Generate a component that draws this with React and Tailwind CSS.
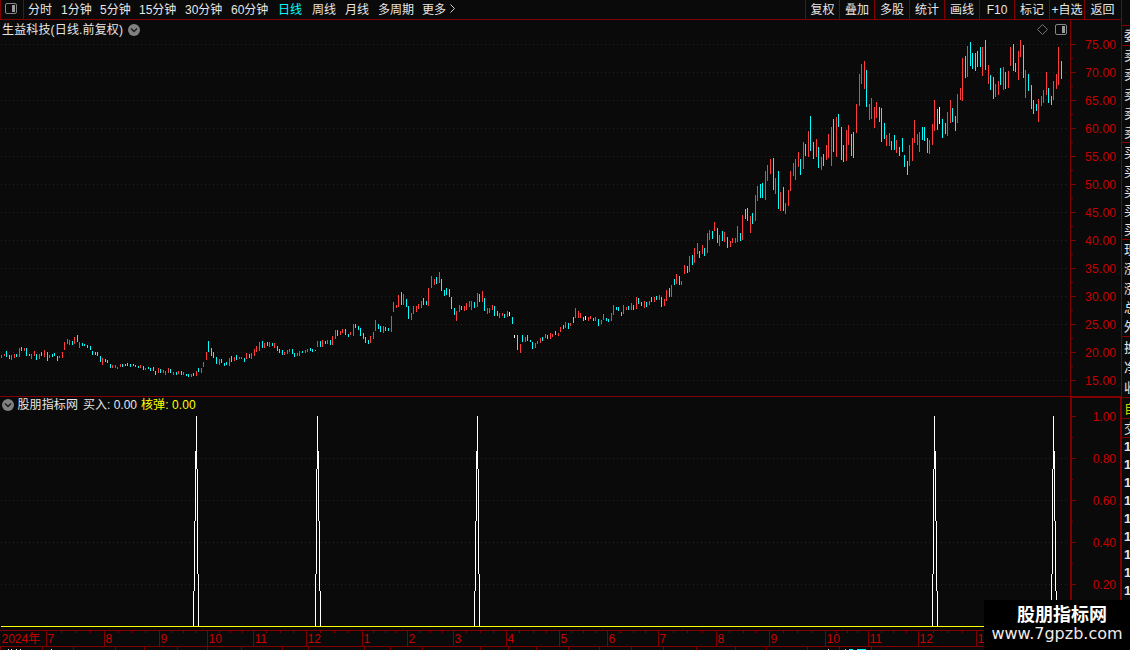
import React from "react";

// x, high, low, kind (r = up, c = down, w = flat)
const CANDLES = `
1 355 358 r,4 354 356 r,6 351 357 c,9 355 359 c,11 355 360 r,14 354 358 r,16 354 357 c,19 348 357 r,21 347 351 c,24 348 351 r,
26 348 356 c,29 354 356 c,31 354 359 r,34 351 356 r,36 354 360 c,39 354 359 r,41 352 356 c,44 350 357 r,47 352 361 c,49 355 358 r,
52 354 357 c,54 353 356 c,57 356 361 c,59 356 358 r,62 352 358 r,64 342 350 r,67 339 344 r,69 340 345 r,72 341 345 c,74 337 344 r,
77 335 342 c,79 342 348 r,82 343 346 c,84 344 346 c,87 345 348 c,90 346 350 c,92 351 355 c,95 352 355 c,97 352 356 c,100 356 362 c,
102 358 365 r,105 359 362 c,107 360 363 c,110 364 368 c,112 365 368 r,115 365 368 r,117 367 369 r,120 364 367 r,122 364 367 c,125 364 366 c,
127 363 366 c,130 364 367 c,133 364 366 c,135 365 367 c,138 366 368 c,140 365 368 r,143 366 370 c,145 368 370 r,148 367 369 c,150 368 371 c,
153 367 371 c,155 371 375 c,158 368 373 r,160 369 373 c,163 370 373 r,165 371 375 r,168 368 373 r,170 369 373 c,173 372 375 r,176 372 375 c,
178 371 374 r,181 371 375 c,183 372 375 r,186 374 376 c,188 374 377 c,191 374 377 r,193 373 376 c,196 371 376 r,198 368 372 c,201 368 373 r,
203 362 367 r,206 352 360 r,208 341 352 c,211 348 356 c,213 352 358 c,216 357 364 c,219 359 365 r,221 359 363 c,224 363 366 c,226 362 365 c,
229 358 366 r,231 356 362 c,234 357 361 r,236 355 360 c,239 357 359 r,241 357 359 r,244 358 362 c,246 353 359 r,249 354 358 c,251 353 359 r,
254 349 356 r,256 346 352 r,259 342 351 r,262 341 348 c,264 343 348 r,267 342 346 c,269 342 347 r,272 343 346 c,274 343 348 r,277 346 351 c,
279 349 353 c,282 350 355 c,284 352 355 r,287 350 354 r,289 349 352 r,292 349 354 c,294 353 357 c,297 353 356 r,299 351 356 r,302 351 353 c,
305 350 353 r,307 349 352 r,310 348 351 c,312 349 352 c,315 350 351 c,317 341 347 r,320 341 347 c,322 340 347 r,325 341 344 c,327 340 344 r,
330 340 345 c,332 336 345 r,335 330 339 r,337 330 336 c,340 331 335 r,342 329 333 r,345 329 335 c,348 334 337 c,350 332 335 r,353 324 336 r,
355 324 328 c,358 326 330 c,360 328 336 c,363 333 339 c,365 337 343 c,368 340 344 c,370 336 343 r,373 332 339 r,375 320 331 r,378 324 329 c,
380 326 332 c,383 326 333 r,385 327 331 c,388 328 331 c,391 316 332 r,393 302 312 r,396 305 308 r,398 295 307 r,401 292 305 c,403 294 305 r,
406 299 307 c,408 306 319 c,411 313 320 r,413 306 314 r,416 306 312 r,418 304 309 r,421 301 308 r,423 298 305 c,426 301 305 c,428 288 306 r,
431 276 288 r,434 279 285 r,436 277 284 c,439 272 283 r,441 279 291 c,444 290 296 c,446 288 295 c,449 289 297 c,451 297 309 c,454 308 315 c,
456 311 321 r,459 305 312 r,461 306 310 c,464 306 311 r,466 303 310 r,469 301 307 r,471 301 310 r,474 302 308 c,477 293 307 r,479 294 302 c,
482 291 302 r,484 298 311 c,487 308 314 r,489 308 313 r,492 305 310 r,494 306 316 c,497 311 316 c,499 313 318 r,502 313 316 r,504 314 318 c,
507 311 317 r,509 312 316 w,512 317 324 c,514 335 338 w,517 335 350 c,520 344 353 r,522 335 342 c,525 337 342 r,527 335 341 c,530 340 342 c,
532 342 349 c,535 343 348 r,537 341 344 r,540 338 343 r,542 337 341 c,545 334 338 r,547 335 339 c,550 333 339 r,552 334 337 r,555 331 335 c,
558 333 336 r,560 327 332 r,563 325 329 c,565 322 328 r,568 323 329 c,570 323 326 r,573 317 323 c,575 308 318 r,578 311 318 r,580 313 318 r,
583 317 321 c,585 316 320 w,588 317 321 r,590 316 319 r,593 318 321 c,595 317 321 r,598 319 326 c,601 320 324 r,603 314 320 r,606 318 321 c,
608 319 322 c,611 313 321 r,613 305 315 r,616 307 310 c,618 307 311 c,621 312 316 c,623 305 314 r,626 307 310 r,628 306 310 c,631 303 310 r,
633 305 310 c,636 297 309 r,638 298 304 c,641 302 306 c,644 301 308 r,646 302 307 c,649 301 305 r,651 297 302 c,654 297 302 r,656 296 300 c,
659 295 300 r,661 297 307 c,664 299 306 r,666 290 301 r,669 288 297 c,671 285 297 r,674 279 285 c,676 274 284 r,679 276 285 c,681 281 285 r,
684 265 274 r,687 266 273 c,689 256 272 r,692 255 265 c,694 248 263 r,697 243 254 r,699 251 258 c,702 245 254 r,704 248 256 c,707 233 253 r,
709 230 240 r,712 231 239 c,714 222 231 r,717 228 243 c,719 235 246 r,722 231 241 c,724 232 242 r,727 237 248 c,730 241 247 r,732 238 243 r,
735 238 243 r,737 226 242 r,740 233 241 c,742 215 240 r,745 209 219 c,747 208 221 c,750 216 233 r,752 213 224 c,755 195 221 r,757 186 201 r,
760 184 198 c,762 183 198 c,765 171 200 r,767 165 181 r,770 159 174 r,773 158 190 c,775 178 194 r,778 171 209 c,780 192 211 r,783 187 211 c,
785 203 214 r,788 190 206 r,790 171 191 r,793 163 176 r,795 159 180 r,798 152 167 r,800 159 175 c,803 142 169 r,805 144 156 c,808 131 157 r,
810 116 151 c,813 142 159 c,816 139 157 r,818 147 168 c,821 157 170 r,823 154 166 c,826 145 160 r,828 134 158 r,831 127 166 r,833 119 152 c,
836 117 157 r,838 114 127 c,841 127 160 c,843 145 162 c,846 130 161 r,848 125 145 r,851 134 156 c,853 132 158 c,856 104 133 r,859 74 106 r,
861 64 84 r,864 61 89 r,866 70 107 c,869 104 120 r,871 98 119 r,874 107 128 r,876 102 118 r,879 107 122 c,881 108 142 c,884 123 139 c,
886 135 146 r,889 133 146 r,891 141 150 c,894 135 150 c,896 140 153 r,899 147 156 c,902 138 152 c,904 155 167 c,907 161 175 c,909 145 166 r,
912 138 161 r,914 120 143 r,917 134 145 r,919 132 152 r,922 127 140 c,924 127 141 c,927 138 153 c,929 140 154 r,932 124 145 r,934 100 131 r,
937 109 130 c,939 107 124 w,942 119 138 c,945 123 134 c,947 112 136 r,950 100 123 r,952 108 122 c,955 116 131 c,957 94 123 r,960 88 100 r,
962 58 101 r,965 56 78 c,967 46 77 r,970 42 66 c,972 53 69 c,975 53 71 c,977 51 67 c,980 47 67 c,982 47 76 r,985 40 70 c,
988 65 84 r,990 75 90 c,993 77 99 c,995 84 97 r,998 81 95 r,1000 68 85 c,1003 67 90 r,1005 72 89 c,1008 71 88 r,1010 47 66 r,
1013 44 71 c,1015 63 72 c,1018 51 80 r,1020 40 57 r,1023 45 78 c,1025 70 98 r,1028 74 91 c,1031 85 109 c,1033 100 114 c,1036 104 111 c,
1038 99 122 r,1041 96 106 r,1043 90 103 r,1046 72 95 r,1048 88 103 c,1051 96 105 c,1053 81 100 r,1056 74 89 r,1058 47 85 r,1061 61 79 c`
  .trim()
  .split(",")
  .map((row) => {
    const [x, high, low, kind] = row.trim().split(" ");
    return { x: +x, high: +high, low: +low, kind };
  });

const CANDLE_COLORS = { r: "#ff3c3c", c: "#00ffff", w: "#ffffff" };

const PERIODS = [
  { label: "分时", width: "w-[33px]" },
  { label: "1分钟", width: "w-[39px]" },
  { label: "5分钟", width: "w-[39px]" },
  { label: "15分钟", width: "w-[46px]" },
  { label: "30分钟", width: "w-[46px]" },
  { label: "60分钟", width: "w-[47px]" },
  { label: "日线", width: "w-[34px]", active: true },
  { label: "周线", width: "w-[33px]" },
  { label: "月线", width: "w-[33px]" },
  { label: "多周期", width: "w-[44px]" },
  { label: "更多", width: "w-[28px]" },
];

const TOOLS = ["复权", "叠加", "多股", "统计", "画线", "F10", "标记", "+自选", "返回"];

const PRICES = [75, 70, 65, 60, 55, 50, 45, 40, 35, 30, 25, 20, 15];
const LEVELS = ["1.00", "0.80", "0.60", "0.40", "0.20"];

// apex x and which side of the spike leans out further
const SPIKES = [
  { x: 196, wide: -1 },
  { x: 317, wide: 1 },
  { x: 477, wide: -1 },
  { x: 934, wide: 1 },
  { x: 1053, wide: 1 },
];

const MONTHS = [
  [46, "7"], [104, "8"], [159, "9"], [207, "10"], [253, "11"], [306, "12"],
  [362, "1"], [407, "2"], [453, "3"], [506, "4"], [559, "5"], [607, "6"],
  [658, "7"], [716, "8"], [769, "9"], [825, "10"], [868, "11"], [918, "12"], [976, "1"],
];

const FOOTER_TICKS = [
  0, 42, 73, 115, 144, 177, 207, 241, 282, 308, 364, 390, 422, 480, 508, 536, 568, 599, 631, 663, 696,
  735, 766, 807, 839, 871,
];

const QUOTE_GROUPS = [
  { rows: ["委"], height: "h-5" },
  { rows: ["卖", "卖", "卖", "卖", "卖"], height: "h-[97px]" },
  { rows: ["买", "买", "买", "买", "买"], height: "h-[97px]" },
  { rows: ["现", "涨", "涨", "总", "外"], height: "h-[97px]" },
  { rows: ["换", "净", "收"], height: "h-[61px]" },
  { rows: ["自"], height: "h-[21px]", color: "text-[#d0d000]" },
  { rows: ["交"], height: "h-[19px]" },
];

const PanelIcon = () => (
  <svg width="12" height="11" viewBox="0 0 12 11" className="shrink-0">
    <rect x="0.5" y="0.5" width="11" height="10" rx="1.5" fill="none" stroke="#858585" />
    <rect x="7" y="2" width="3" height="7" fill="#9a9a9a" />
  </svg>
);

const ChevronBadge = () => (
  <svg width="12" height="12" viewBox="0 0 12 12" className="shrink-0">
    <circle cx="6" cy="6" r="6" fill="#808080" />
    <path d="M3 4.5 L6 7.5 L9 4.5" fill="none" stroke="#1a1a1a" strokeWidth="1.4" />
  </svg>
);

const Toolbar = () => (
  <div className="flex h-5 w-[1122px] border-b border-[#800000] text-[#e6e6e6]">
    <div className="flex w-6 items-start border-x border-[#800000] pl-1 pt-[3px]">
      <PanelIcon />
    </div>
    <div className="flex pl-1 leading-[21px]">
      {PERIODS.map((p) => (
        <div key={p.label} className={`${p.width} whitespace-nowrap ${p.active ? "text-[#00ffff]" : ""}`}>
          {p.label}
        </div>
      ))}
      <svg width="6" height="9" viewBox="0 0 6 9" className="mt-1">
        <path d="M0.5 0.5 L4.5 4.5 L0.5 8.5" fill="none" stroke="#d0d0d0" />
      </svg>
    </div>
    <div className="ml-auto flex border-r border-[#800000] leading-[21px]">
      {TOOLS.map((t, i) => (
        <div
          key={t}
          className={`${i === 0 ? "w-[34px]" : i === 8 ? "w-[37px] pr-px" : "w-[35px]"} h-[19px] whitespace-nowrap border-l border-[#800000] text-center`}
        >
          {t}
        </div>
      ))}
    </div>
  </div>
);

const DottedLine = ({ y }) => (
  <line x1="1" x2="1066" y1={y + 0.5} y2={y + 0.5} stroke="#7c0000" strokeDasharray="1 3" />
);

const PricePanel = () => (
  <div className="relative h-[376px]">
    <svg width="1121" height="376" viewBox="0 20 1121 376" shapeRendering="crispEdges">
      {PRICES.map((price, i) => {
        const y = 44 + i * 28;
        return (
          <g key={price}>
            <DottedLine y={y} />
            <rect x="1071" y={y} width="5" height="1" fill="#800000" />
            {price !== 15 && <rect x="1071" y={y + 14} width="2" height="1" fill="#800000" />}
            <text x="1085" y={y + 5} textLength="31" fill="#c80000">
              {price.toFixed(2)}
            </text>
          </g>
        );
      })}
      <rect x="1070" y="20" width="1" height="376" fill="#800000" />
      {CANDLES.map((c) => (
        <rect key={c.x} x={c.x} y={c.high} width="1" height={c.low - c.high} fill={CANDLE_COLORS[c.kind]} />
      ))}
    </svg>
    <div className="absolute left-0 top-0 flex h-[19px] w-[1067px] items-center pl-0.5 text-[#e6e6e6]">
      <span className="w-[126px] whitespace-nowrap tracking-[0.15px]">生益科技(日线.前复权)</span>
      <ChevronBadge />
      <svg width="11" height="11" viewBox="0 0 11 11" className="ml-auto mr-[7px]">
        <path d="M5.5 0.5 L10.5 5.5 L5.5 10.5 L0.5 5.5 Z" fill="none" stroke="#747474" />
      </svg>
      <PanelIcon />
    </div>
  </div>
);

const Spike = ({ x, wide }) => (
  <g fill="#ffffff">
    <rect x={x} y="416" width="1" height="53" />
    <rect x={x - wide} y="469" width="1" height="105" />
    <rect x={x - wide * 2} y="574" width="1" height="52" />
    <rect x={x + wide} y="451" width="1" height="70" />
    <rect x={x + wide * 2} y="521" width="1" height="70" />
    <rect x={x + wide * 3} y="591" width="1" height="35" />
  </g>
);

const IndicatorPanel = () => (
  <div className="relative h-[234px]">
    <svg width="1121" height="234" viewBox="0 396 1121 234" shapeRendering="crispEdges">
      <rect x="0" y="396" width="1121" height="1" fill="#800000" />
      <rect x="1071" y="397" width="50" height="1" fill="#800000" />
      <rect x="1070" y="397" width="2" height="233" fill="#800000" />
      <rect x="1120" y="397" width="1" height="233" fill="#800000" />
      {LEVELS.map((level, i) => {
        const y = 416 + i * 42;
        return (
          <g key={level}>
            {i > 0 && <DottedLine y={y} />}
            <rect x="1072" y={y} width="4" height="1" fill="#800000" />
            <rect x="1072" y={y + 21} width="1" height="1" fill="#800000" />
            <text x="1116" y={y + 5} textAnchor="end" fill="#c80000">
              {level}
            </text>
          </g>
        );
      })}
      {SPIKES.map((s) => (
        <Spike key={s.x} {...s} />
      ))}
      <rect x="1" y="626" width="1069" height="1" fill="#ffff00" />
    </svg>
    <div className="absolute left-0 top-0 flex h-[18px] items-center whitespace-nowrap pl-0.5 text-[#e6e6e6]">
      <ChevronBadge />
      <span className="ml-[3.5px] w-[65.5px] tracking-[0.1px]">股朋指标网</span>
      <span className="w-[58px]">买入: 0.00</span>
      <span className="tracking-[0.1px] text-[#ffff00]">核弹: 0.00</span>
    </div>
  </div>
);

const DateAxis = () => (
  <svg width="1121" height="20" viewBox="0 630 1121 20" shapeRendering="crispEdges">
    <rect x="0" y="630" width="1121" height="1" fill="#800000" />
    <rect x="0" y="646" width="1121" height="1" fill="#800000" />
    <text x="1.5" y="643" fill="#c80000">
      2024年
    </text>
    {MONTHS.map(([x, label], i) => {
      const next = i < MONTHS.length - 1 ? MONTHS[i + 1][0] : x + 56;
      return (
        <g key={x}>
          <rect x={x} y="630" width="1" height="16" fill="#800000" />
          <text x={x + 1.5} y="643" fill="#c80000">
            {label}
          </text>
          {[1, 2, 3].map((n) => (
            <rect key={n} x={Math.round(x + ((next - x) * n) / 4)} y="631" width="1" height="2" fill="#800000" />
          ))}
        </g>
      );
    })}
    {FOOTER_TICKS.map((x) => (
      <rect key={x} x={x} y="647" width="1" height="3" fill="#800000" />
    ))}
    {[8, 11, 16, 20, 51, 828].map((x) => (
      <rect key={x} x={x} y="649" width="1" height="1" fill="#e6e6e6" />
    ))}
    <path d="M845 649h1v1h-1z M849 649h4v1h-4z M857 649h9v1h-9z" fill="#00ffff" />
  </svg>
);

const QuoteStrip = () => (
  <div className="w-[9px] overflow-hidden border-l border-[#800000] pt-[5px] text-[13px] text-[#e6e6e6]">
    {QUOTE_GROUPS.map((g, i) => (
      <div key={i} className={`flex w-5 flex-col border-t border-[#800000] pl-[2px] ${g.height} ${g.color || ""}`}>
        {g.rows.map((r, j) => (
          <div key={j} className="flex min-h-0 flex-1 items-center leading-none">
            {r}
          </div>
        ))}
      </div>
    ))}
    <div className="w-5 border-t border-[#800000] pl-[2px] font-bold">
      {Array.from({ length: 9 }, (_, i) => (
        <div key={i} className="h-[18px] leading-[18px]">
          1
        </div>
      ))}
    </div>
  </div>
);

const Watermark = () => (
  <div className="absolute bottom-0 right-0 flex h-[50px] w-[146px] flex-col items-center bg-black text-white">
    <div className="mt-[5px] pl-[10px] text-[18px] font-bold leading-[21px]">股朋指标网</div>
    <div className="whitespace-nowrap font-['DejaVu_Sans',sans-serif] text-[16px] leading-[16px] text-[#f2eaea]">
      www.7gpzb.com
    </div>
  </div>
);

const App = () => {
  return (
    <div className="relative flex h-[650px] w-[1130px] flex-col overflow-hidden bg-[#0a0a0a] font-['Liberation_Sans','Noto_Sans_CJK_SC',sans-serif] text-[12px]">
      <Toolbar />
      <div className="flex h-[630px]">
        <div className="w-[1121px] shrink-0">
          <PricePanel />
          <IndicatorPanel />
          <DateAxis />
        </div>
        <QuoteStrip />
      </div>
      <Watermark />
    </div>
  );
};

export default App;
